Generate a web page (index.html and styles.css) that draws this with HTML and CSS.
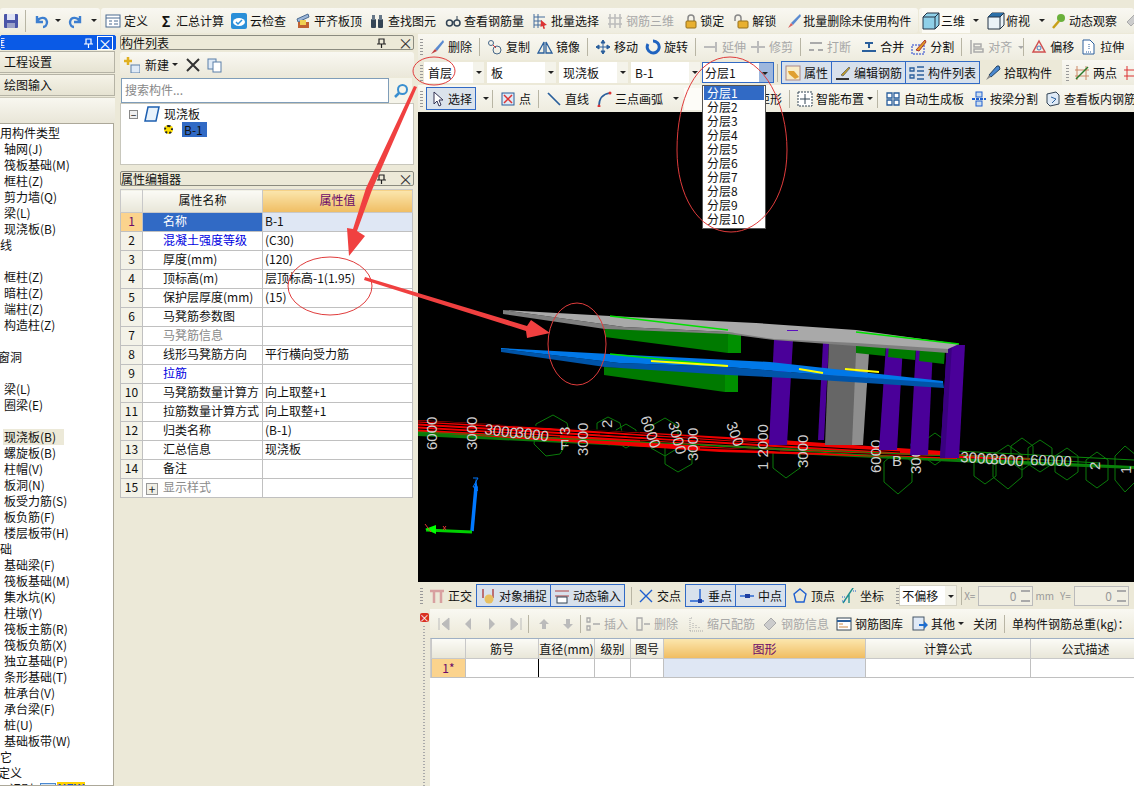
FILE: index.html
```html
<!DOCTYPE html>
<html lang="zh">
<head>
<meta charset="utf-8">
<title>现浇板</title>
<link rel="stylesheet" href="styles.css">
</head>
<body>
<div class="app">
  <div class="topbar">
    <div class="group g1">
      <svg class="ic" viewBox="0 0 16 16"><rect x="1" y="1" width="14" height="14" rx="1" fill="#4a55a8"/><rect x="4" y="1" width="8" height="6" fill="#dfe3f5"/><rect x="4" y="10" width="8" height="5" fill="#9aa0c8"/></svg>
      <span class="sep s1"></span>
      <svg class="ic u1" viewBox="0 0 16 16"><path d="M3 3v6h6M3 9c2-5 9-6 10 0 0 3-2 5-4 5" fill="none" stroke="#3d7fd0" stroke-width="2.4"/></svg>
      <span class="car k1"></span>
      <svg class="ic u2" viewBox="0 0 16 16"><path d="M13 3v6H7M13 9c-2-5-9-6-10 0 0 3 2 5 4 5" fill="none" stroke="#3d7fd0" stroke-width="2.4"/></svg>
      <span class="car k2"></span>
    </div>
    <div class="group g2">
      <span class="it w1"><svg class="ic" viewBox="0 0 16 16"><rect x="1" y="2" width="14" height="12" fill="#fff" stroke="#4a6a90"/><path d="M1 5h14M4 8h3M9 8h4M4 11h3M9 11h4" stroke="#4a6a90"/></svg>定义</span>
      <span class="it w2"><span class="sigma">Σ</span>汇总计算</span>
      <span class="it w3"><svg class="ic" viewBox="0 0 16 16"><rect x="0" y="0" width="16" height="16" rx="2" fill="#2a8fd8"/><ellipse cx="8" cy="9" rx="6" ry="4" fill="#fff"/><path d="M5 9l2 2 4-4" fill="none" stroke="#2a8fd8" stroke-width="1.5"/></svg>云检查</span>
      <span class="it w4"><svg class="ic" viewBox="0 0 16 16"><path d="M2 6l11-5 1 3-11 5z" fill="#9cb6d8" stroke="#4a6a90"/><rect x="3" y="9" width="11" height="6" fill="#c06030"/><rect x="5" y="7" width="6" height="5" fill="#f0d050"/></svg>平齐板顶</span>
      <span class="it w5"><svg class="ic" viewBox="0 0 16 16"><rect x="2" y="6" width="5" height="9" rx="1" fill="#345"/><rect x="9" y="6" width="5" height="9" rx="1" fill="#345"/><rect x="3" y="2" width="3" height="5" fill="#678"/><rect x="10" y="2" width="3" height="5" fill="#678"/></svg>查找图元</span>
      <span class="it w6"><svg class="ic" viewBox="0 0 16 16"><circle cx="4.500" cy="10" r="3" fill="none" stroke="#345" stroke-width="1.500"/><circle cx="12" cy="10" r="3" fill="none" stroke="#345" stroke-width="1.500"/><path d="M7 9h2M12 7V3" stroke="#345"/></svg>查看钢筋量</span>
      <span class="it w7"><svg class="ic" viewBox="0 0 16 16"><path d="M2 1v14M6 1v14M2 4h11M2 8h8M2 12h11" stroke="#456c9c" fill="none"/><path d="M9 7l6 5-3 .5 1 3-1.500 .5-1-3-2 1z" fill="#d33"/></svg>批量选择</span>
      <span class="it off w8"><svg class="ic" viewBox="0 0 16 16"><path d="M3 1v14M8 1v14M13 1v14M1 5h14M1 11h14" stroke="#bbb" stroke-width="1.500" fill="none"/></svg>钢筋三维</span>
      <span class="it w9"><svg class="ic" viewBox="0 0 16 16"><path d="M5 8V5a3 3 0 016 0v3" fill="none" stroke="#888" stroke-width="1.500"/><rect x="3" y="8" width="10" height="7" rx="1" fill="#e8b030" stroke="#96701a"/></svg>锁定</span>
      <span class="it w10"><svg class="ic" viewBox="0 0 16 16"><path d="M1 8V5a3 3 0 016 0v3" fill="none" stroke="#888" stroke-width="1.500"/><rect x="4" y="8" width="10" height="7" rx="1" fill="#e8b030" stroke="#96701a"/></svg>解锁</span>
      <span class="it w11"><svg class="ic" viewBox="0 0 16 16"><path d="M14 1L5 10l2 2 8-9z" fill="#5a8ad0"/><path d="M5 10l-3 5 5-3z" fill="#d86060"/></svg>批量删除未使用构件</span>
    </div>
    <div class="group g3">
      <span class="it w12 lit"><svg class="ic big" viewBox="0 0 18 18"><path d="M1 5l4-4h12v12l-4 4H1z" fill="#8fd0e8" stroke="#234"/><path d="M1 5h12v12M13 5l4-4" fill="none" stroke="#234"/></svg>三维</span>
      <span class="car k3"></span>
      <span class="it w13"><svg class="ic big" viewBox="0 0 18 18"><path d="M1 5l4-4h12v12l-4 4H1z" fill="#eaf3f8" stroke="#234"/><path d="M1 5l4-4h12l-4 4z" fill="#2a6fa8"/><path d="M1 5h12v12M13 5l4-4" fill="none" stroke="#234"/></svg>俯视</span>
      <span class="car k4"></span>
      <span class="it w14"><svg class="ic" viewBox="0 0 16 16"><circle cx="10" cy="5" r="4" fill="#6ab03a"/><path d="M8 8l-6 7" stroke="#c8a018" stroke-width="2.500"/></svg>动态观察</span>
      <svg class="ic w15" viewBox="0 0 16 16"><path d="M3 9l7-7 4 4-7 7z" fill="#ccc" stroke="#aaa"/></svg>
    </div>
  </div>

  <div class="main">
    <aside class="left">
      <div class="title active"><span class="title-text clip">框</span><svg class="pin" viewBox="0 0 10 10"><path d="M3 1h5v5H3zM1 6h9M5.500 6v4" fill="none" stroke="#fff" stroke-width="1.200"/></svg><span class="closebox">×</span></div>
      <div class="nav">工程设置</div>
      <div class="nav">绘图输入</div>
      <div class="blank"></div>
      <div class="tree">
        <div class="hd h1">常用构件类型</div>
        <div class="li">轴网(J)</div><div class="li">筏板基础(M)</div><div class="li">框柱(Z)</div><div class="li">剪力墙(Q)</div><div class="li">梁(L)</div><div class="li">现浇板(B)</div>
        <div class="hd h2">轴线</div>
        <div class="gap"></div>
        <div class="li">框柱(Z)</div><div class="li">暗柱(Z)</div><div class="li">端柱(Z)</div><div class="li">构造柱(Z)</div>
        <div class="gap"></div>
        <div class="hd h3">门窗洞</div>
        <div class="gap"></div>
        <div class="li">梁(L)</div><div class="li">圈梁(E)</div>
        <div class="gap"></div>
        <div class="li sel-li">现浇板(B)</div><div class="li">螺旋板(B)</div><div class="li">柱帽(V)</div><div class="li">板洞(N)</div><div class="li">板受力筋(S)</div><div class="li">板负筋(F)</div><div class="li">楼层板带(H)</div>
        <div class="hd h2">基础</div>
        <div class="li">基础梁(F)</div><div class="li">筏板基础(M)</div><div class="li">集水坑(K)</div><div class="li">柱墩(Y)</div><div class="li">筏板主筋(R)</div><div class="li">筏板负筋(X)</div><div class="li">独立基础(P)</div><div class="li">条形基础(T)</div><div class="li">桩承台(V)</div><div class="li">承台梁(F)</div><div class="li">桩(U)</div><div class="li">基础板带(W)</div>
        <div class="hd h2">其它</div>
        <div class="hd h3">自定义</div>
        <div class="hd h4">CAD识别<span class="grid-ic"></span><span class="new">NEW</span></div>
      </div>
    </aside>

    <section class="mid">
      <div class="title"><span class="title-text">构件列表</span><svg class="pin" viewBox="0 0 10 10"><path d="M3 1h5v5H3zM1 6h9M5.500 6v4" fill="none" stroke="#222" stroke-width="1.200"/></svg><span class="closex">×</span></div>
      <div class="mini">
        <svg class="ic" viewBox="0 0 16 16"><rect x="7" y="8" width="9" height="8" fill="#dfeaf6" stroke="#5a7ea8"/><path d="M4 0v8M0 4h8" stroke="#e0b020" stroke-width="2.500"/></svg>
        <span class="new-t">新建</span><span class="car"></span>
        <svg class="ic x" viewBox="0 0 16 16"><path d="M2 2l12 12M14 2L2 14" stroke="#333" stroke-width="2"/></svg>
        <svg class="ic" viewBox="0 0 16 16"><rect x="1" y="2" width="8" height="10" fill="#dfeaf6" stroke="#5a7ea8"/><rect x="6" y="5" width="8" height="10" fill="#fff" stroke="#5a7ea8"/></svg>
      </div>
      <div class="search">
        <div class="input">搜索构件...</div>
        <div class="sbtn"><svg viewBox="0 0 16 16" class="ic"><circle cx="9.500" cy="6.500" r="4.500" fill="none" stroke="#3a8fd0" stroke-width="2"/><path d="M6 10l-4 4" stroke="#3a8fd0" stroke-width="2.500"/></svg></div>
      </div>
      <div class="ctree">
        <div class="node"><span class="plus">−</span><svg class="ic" viewBox="0 0 16 16"><path d="M4 1h11l-3 14H1z" fill="#e8f2fb" stroke="#1d5fb0" stroke-width="1.500"/></svg><span>现浇板</span></div>
        <div class="node n2"><span class="gear"></span><span class="chosen">B-1</span></div>
      </div>
      <div class="title t2"><span class="title-text">属性编辑器</span><svg class="pin" viewBox="0 0 10 10"><path d="M3 1h5v5H3zM1 6h9M5.500 6v4" fill="none" stroke="#222" stroke-width="1.200"/></svg><span class="closex">×</span></div>
      <div class="props">
        <table class="ptable">
          <colgroup><col class="p0"><col class="p1"><col class="p2"></colgroup>
          <thead><tr><th></th><th>属性名称</th><th class="hot">属性值</th></tr></thead>
          <tbody>
            <tr class="cur"><td class="n">1</td><td class="k">名称</td><td class="v">B-1</td></tr>
            <tr><td class="n">2</td><td class="k link">混凝土强度等级</td><td class="v">(C30)</td></tr>
            <tr><td class="n">3</td><td class="k">厚度(mm)</td><td class="v">(120)</td></tr>
            <tr><td class="n">4</td><td class="k">顶标高(m)</td><td class="v">层顶标高-1(1.95)</td></tr>
            <tr><td class="n">5</td><td class="k">保护层厚度(mm)</td><td class="v">(15)</td></tr>
            <tr><td class="n">6</td><td class="k">马凳筋参数图</td><td class="v"></td></tr>
            <tr><td class="n">7</td><td class="k dim">马凳筋信息</td><td class="v"></td></tr>
            <tr><td class="n">8</td><td class="k">线形马凳筋方向</td><td class="v">平行横向受力筋</td></tr>
            <tr><td class="n">9</td><td class="k link">拉筋</td><td class="v"></td></tr>
            <tr><td class="n">10</td><td class="k">马凳筋数量计算方</td><td class="v">向上取整+1</td></tr>
            <tr><td class="n">11</td><td class="k">拉筋数量计算方式</td><td class="v">向上取整+1</td></tr>
            <tr><td class="n">12</td><td class="k">归类名称</td><td class="v">(B-1)</td></tr>
            <tr><td class="n">13</td><td class="k">汇总信息</td><td class="v">现浇板</td></tr>
            <tr><td class="n">14</td><td class="k">备注</td><td class="v"></td></tr>
            <tr><td class="n">15</td><td class="k dim exp"><span class="plus2">+</span>显示样式</td><td class="v"></td></tr>
          </tbody>
        </table>
      </div>
    </section>

    <section class="right">
      <div class="row r2">
        <span class="handle"></span>
        <span class="it"><svg class="ic" viewBox="0 0 16 16"><path d="M14 1L6 10l2 2 7-9z" fill="#5a8ad0"/><path d="M6 10l-4 5 6-3z" fill="#c04040"/></svg>删除</span><span class="sep"></span>
        <span class="it"><svg class="ic" viewBox="0 0 16 16"><circle cx="4" cy="4" r="2.500" fill="none" stroke="#468"/><circle cx="10" cy="11" r="4" fill="none" stroke="#468"/><path d="M6 6l3 3" stroke="#d33"/></svg>复制</span>
        <span class="it"><svg class="ic" viewBox="0 0 16 16"><path d="M7 3v11H1zM9 3v11h6z" fill="none" stroke="#2a5f9c" stroke-width="1.300"/></svg>镜像</span><span class="sep"></span>
        <span class="it"><svg class="ic" viewBox="0 0 16 16"><path d="M8 1v14M1 8h14M8 1L6 4h4zM8 15l-2-3h4zM1 8l3-2v4zM15 8l-3-2v4z" fill="#2a5f9c" stroke="#2a5f9c"/></svg>移动</span>
        <span class="it"><svg class="ic" viewBox="0 0 16 16"><path d="M8 2a6 6 0 11-5 3" fill="none" stroke="#1f63c0" stroke-width="3"/></svg>旋转</span><span class="sep"></span>
        <span class="it off"><svg class="ic" viewBox="0 0 16 16"><path d="M1 8h11M13 3v10" stroke="#bbb" stroke-width="2"/></svg>延伸</span>
        <span class="it off pull3"><svg class="ic" viewBox="0 0 16 16"><path d="M1 8h14M8 2v12" stroke="#bbb" stroke-width="2"/></svg>修剪</span><span class="sep"></span>
        <span class="it off"><svg class="ic" viewBox="0 0 16 16"><path d="M1 11h5M10 11h5M2 4h12" stroke="#aaa" stroke-width="2"/></svg>打断</span>
        <span class="it push3"><svg class="ic" viewBox="0 0 16 16"><path d="M1 12h14M4 4h8M8 4v5" stroke="#2a5f9c" stroke-width="2"/></svg>合并</span>
        <span class="it"><svg class="ic" viewBox="0 0 16 16"><rect x="1" y="6" width="12" height="9" fill="none" stroke="#1f3fd0" stroke-dasharray="2 1"/><path d="M14 1L5 11l3 1 7-9z" fill="#e0a020" stroke="#a33"/></svg>分割</span><span class="sep"></span>
        <span class="it off"><svg class="ic" viewBox="0 0 16 16"><path d="M2 1v14M5 5h7v3H5zM5 10h9v3H5z" fill="none" stroke="#aaa" stroke-width="1.500"/></svg>对齐<span class="car light"></span></span><span class="sep pull8"></span>
        <span class="it"><svg class="ic" viewBox="0 0 16 16"><path d="M8 2l6 11H2z" fill="none" stroke="#d05050" stroke-width="1.500"/><circle cx="8" cy="9" r="2" fill="none" stroke="#4a7ac0"/></svg>偏移</span>
        <span class="it"><svg class="ic" viewBox="0 0 16 16"><path d="M2 1h7l4 4v10H2z" fill="#fff" stroke="#2a5f9c"/><path d="M5 13h6M8 5v6" stroke="#2a5f9c" stroke-dasharray="1 1"/></svg>拉伸</span>
      </div>
      <div class="row r3">
        <span class="handle"></span>
        <span class="sel s-a">首层<i class="drop"></i></span>
        <span class="sel s-b">板<i class="drop"></i></span>
        <span class="sel s-b">现浇板<i class="drop"></i></span>
        <span class="sel s-b">B-1<i class="drop"></i></span>
        <span class="sel s-c">分层1<i class="drop open"></i>
          <span class="list">
            <span class="opt on">分层1</span><span class="opt">分层2</span><span class="opt">分层3</span><span class="opt">分层4</span><span class="opt">分层5</span><span class="opt">分层6</span><span class="opt">分层7</span><span class="opt">分层8</span><span class="opt">分层9</span><span class="opt">分层10</span>
          </span>
        </span>
        <span class="sep"></span>
        <span class="btn"><svg class="ic" viewBox="0 0 16 16"><rect x="1" y="1" width="14" height="14" fill="#f8ecc8" stroke="#a88"/><path d="M3 6h6l5 6-4 2-6-5z" fill="#e0a030"/></svg>属性</span>
        <span class="btn"><svg class="ic" viewBox="0 0 16 16"><path d="M14 2L6 10l2 1 7-8z" fill="#c8a020" stroke="#776"/><path d="M1 14h13" stroke="#333" stroke-width="2"/></svg>编辑钢筋</span>
        <span class="btn"><svg class="ic" viewBox="0 0 16 16"><path d="M1 3h4v3H1zM1 10h4v3H1zM8 2h7M8 6h7M8 10h7M8 14h7" fill="none" stroke="#2a5f9c" stroke-width="1.300"/></svg>构件列表</span>
        <span class="it pick"><svg class="ic" viewBox="0 0 16 16"><path d="M14 1l-2-0-8 9 2 2 9-8z" fill="#4a88d0" stroke="#246"/><path d="M4 10l-3 5 5-3z" fill="#888"/></svg>拾取构件</span>
        <span class="chip"><span class="handle"></span><span class="it"><svg class="ic" viewBox="0 0 16 16"><path d="M3 1v14M12 1v14M1 5h14M1 11h14" stroke="#c86"/><path d="M2 14L14 2" stroke="#2a7a2a" stroke-width="1.500"/></svg>两点</span><svg class="ic last" viewBox="0 0 16 16"><path d="M4 1v14M12 1v14M1 5h14M1 11h14" stroke="#d33"/></svg></span>
      </div>
      <div class="row r4">
        <span class="handle"></span>
        <span class="it pressed"><svg class="ic" viewBox="0 0 16 16"><path d="M5 1v12l3-3 2 5 2-1-2-5h4z" fill="#fff" stroke="#335"/></svg>选择</span><span class="car"></span><span class="sep pull4"></span>
        <span class="it"><svg class="ic" viewBox="0 0 16 16"><rect x="2" y="2" width="12" height="12" fill="#dfeaf6" stroke="#2a5f9c"/><path d="M4 4l8 8M12 4l-8 8" stroke="#d33" stroke-width="1.500"/></svg>点</span><span class="sep"></span>
        <span class="it"><svg class="ic" viewBox="0 0 16 16"><path d="M2 2l12 12" stroke="#2a5f9c" stroke-width="1.700"/></svg>直线</span>
        <span class="it"><svg class="ic" viewBox="0 0 16 16"><path d="M3 15C3 7 7 3 14 2" fill="none" stroke="#2a5f9c" stroke-width="1.700"/><circle cx="3" cy="15" r="1.500" fill="#d33"/><circle cx="14" cy="2" r="1.500" fill="#d33"/></svg>三点画弧</span><span class="car push3"></span>
        <span class="hidden-white"></span>
        <span class="it rect">矩形</span><span class="sep"></span>
        <span class="it"><svg class="ic" viewBox="0 0 16 16"><rect x="1" y="1" width="14" height="14" fill="#fff" stroke="#345" stroke-dasharray="2 1"/><path d="M8 3v10M3 8h10" stroke="#345"/></svg>智能布置<span class="car"></span></span><span class="sep pull3"></span>
        <span class="it"><svg class="ic" viewBox="0 0 16 16"><path d="M2 2h5v5H2zM9 2h5v5H9zM2 9h5v5H2zM9 9h5v5H9z" fill="#fff" stroke="#2a5f9c" stroke-width="1.300"/></svg>自动生成板</span>
        <span class="it"><svg class="ic" viewBox="0 0 16 16"><path d="M1 8h14" stroke="#1f5fd0" stroke-width="2" stroke-dasharray="3 1"/><rect x="5" y="1" width="6" height="5" fill="#cde" stroke="#1f5fd0"/><rect x="5" y="10" width="6" height="5" fill="#cde" stroke="#1f5fd0"/></svg>按梁分割</span>
        <span class="it"><svg class="ic" viewBox="0 0 16 16"><path d="M2 3l9-2 3 3v9l-9 2-3-3z" fill="#dfeaf6" stroke="#345"/><path d="M6 6l5 2-4 4" fill="none" stroke="#2a5f9c"/></svg>查看板内钢筋</span>
      </div>

      <div class="canvas">
        <svg class="scene" viewBox="418 112 716 470" preserveAspectRatio="none">
          <rect x="418" y="112" width="716" height="470" fill="#000"/>
          <g class="hex">
            <path d="M553 415l14 8 3 14-10 17-14 2-12-12 2-20z"/><path d="M608 417l12 6 3 14-14 8-12-8v-14z"/><path d="M626 424l10 6v12l-10 6-10-6v-12z"/>
            <path d="M665 418l13 8v22l-13 8-14-8v-22z"/><path d="M678 436l14 8v20l-14 8-13-8v-20z"/><path d="M786 440l14 10v18l-14 10-13-10v-18z"/>
            <path d="M898 450l14 12v20l-14 12-14-12v-20z"/><path d="M935 433l11 8v16l-11 8-11-8v-16z"/><path d="M1008 445l14 10v22l-14 12-15-12v-22z"/>
            <path d="M1067 448l11 8v16l-11 8-12-8v-16z"/><path d="M1097 452l11 8v20l-11 8-11-8v-20z"/><path d="M1125 446l12 10v24l-12 12-10-12v-24z"/>
            <path d="M1040 440l12 8v16l-12 8-12-8v-16z"/><path d="M1022 438l11 8v16l-11 8-11-8v-16z"/><path d="M985 452l11 8v16l-11 8-11-8v-16z"/>
          </g>
          <polygon class="g-d" points="418,431 957,458 1134,466 1134,469 957,462 418,436"/>
          <polygon class="red" points="418,420 780,440 957,452 957,459 720,452 418,432"/>
          <polygon class="red" points="957,454 1030,458 1030,460 957,458"/>
          <g class="blk">
            <path d="M418 423L700 440M418 426L800 449M418 429L560 437M500 424L760 442M600 434L900 452M700 448L950 457M418 421L640 432M640 441L780 451"/>
          </g>
          <g class="grn">
            <path d="M957 451L1134 460M957 459L1134 467M700 445L950 460M418 432L950 456M957 455L1100 463"/>
          </g>
          <g class="labels">
            <text transform="translate(437,450) rotate(-90)">6000</text>
            <text transform="translate(477,450) rotate(-90)">3000</text>
            <text transform="translate(588,456) rotate(-90)">3000</text>
            <text transform="translate(698,461) rotate(-90)">3000</text>
            <text transform="translate(768,470) rotate(-90)">1 2000</text>
            <text transform="translate(808,468) rotate(-90)">3000</text>
            <text transform="translate(881,473) rotate(-90)">6000</text>
            <text transform="translate(921,474) rotate(-90)">3000</text>
            <text transform="translate(640,418) rotate(70)">6000</text>
            <text transform="translate(668,423) rotate(75)">3000</text>
            <text transform="translate(726,424) rotate(70)">300</text>
            <text transform="translate(484,434) rotate(8)">3000</text>
            <text transform="translate(515,437) rotate(8)">3000</text>
            <text transform="translate(960,462) rotate(4)">3000</text>
            <text transform="translate(990,464) rotate(4)">3000</text>
            <text transform="translate(1030,465) rotate(2)">60000</text>
            <text transform="translate(570,435) rotate(-90)">3</text>
            <text transform="translate(612,428) rotate(-90)">2</text>
            <text transform="translate(1100,470) rotate(-90)">2</text>
            <text transform="translate(1131,474) rotate(-90)">1</text>
            <text transform="translate(892,466)">B</text>
            <text transform="translate(560,450)">F</text>
          </g>
          <polygon class="pur" points="823,342 829,342 824,440 818,440"/>
          <polygon points="829,342 857,344 853,445 825,445" fill="#666"/>
          <polygon points="856,353 869,353 863,445 852,445" fill="#8e8e8e"/>
          <polygon class="pur" points="774,340 793,340 787,445 769,445"/>
          <polygon class="pur" points="886,345 903,345 897,450 879,450"/>
          <polygon class="pur" points="916,347 933,347 928,455 910,455"/>
          <polygon class="pur" points="947,345 965,345 959,458 940,458"/>
          <polygon class="pur2" points="947,345 952,345 945,458 940,458"/>
          <polygon class="gb" points="605,329 728,332 728,353 605,337"/><polygon class="gb2" points="728,332 741,333 741,353 728,353"/>
          <polygon class="gb" points="856,344 886,346 885,356 856,353"/><polygon class="gb" points="889,346 916,348 915,360 888,357"/><polygon class="gb" points="920,348 945,350 944,364 919,361"/>
          <polygon points="503,310 624,327 728,332 856,342 948,347 948,353 856,346 774,340 728,334 605,329 503,314" fill="#7f7f7f"/>
          <polygon points="503,310 610,316 756,323 856,330 959,344 948,349 856,343 774,339 741,334 728,332 624,327" fill="#a9a9a9"/>
          <path class="lime" d="M610 316L728 330M856 332L959 344"/>
          <polygon points="787,330 798,330 798,331 787,331" fill="#5a10c0"/>
          <polygon class="gb" points="604,367 725,371 725,392 604,375"/><polygon class="gb2" points="725,371 738,371 738,392 725,392"/>
          <polygon points="501,349 619,363 728,367 800,373 943,382 944,388 788,378 728,375 605,367 501,352" fill="#0054a8"/>
          <polygon points="501,348 610,354 770,362 943,381 943,383 800,373 728,367 619,363 501,349" fill="#0078e8"/>
          <path class="lime" d="M610 354L728 366"/>
          <path class="yel" d="M651 361L728 366M799 369L823 373M845 369L879 372"/>
          <path d="M472 531L476 487" stroke="#0078ff" stroke-width="3.500"/>
          <path d="M476 478L474 491h4z" fill="#0078ff"/>
          <path d="M473 478h5l-5 9h5" fill="none" stroke="#0078ff"/>
          <path d="M426 530L472 532" stroke="#00d000" stroke-width="3"/>
          <path d="M425 529L436 525v9z" fill="#00ff00"/>
          <path d="M425 524l6 8M443 526l3 4M446 526l-3 4" stroke="#d33"/>
        </svg>
      </div>

      <div class="row ra">
        <span class="handle"></span>
        <span class="it"><svg class="ic" viewBox="0 0 16 16"><path d="M1 3h14M5 3v12M12 3v12" stroke="#d8a0a0" stroke-width="2.500"/></svg>正交</span>
        <span class="btn"><svg class="ic" viewBox="0 0 16 16"><path d="M3 1v9M13 1v9" stroke="#b04040" stroke-width="1.400"/><circle cx="9" cy="11" r="4.500" fill="#e8c060"/></svg>对象捕捉</span>
        <span class="btn"><svg class="ic" viewBox="0 0 16 16"><path d="M1 3h14M1 8h14" stroke="#b04040"/><rect x="3" y="9" width="10" height="6" fill="#fff" stroke="#345"/></svg>动态输入</span>
        <span class="sep"></span>
        <span class="it"><svg class="ic" viewBox="0 0 16 16"><path d="M2 2l12 12M14 2L2 14" stroke="#1f5fd0" stroke-width="1.400"/></svg>交点</span>
        <span class="btn"><svg class="ic" viewBox="0 0 16 16"><path d="M1 13h14M11 1v14" stroke="#1f5fd0" stroke-width="1.400"/><rect x="9" y="11" width="4" height="4" fill="#1f3fa0"/></svg>垂点</span>
        <span class="btn"><svg class="ic" viewBox="0 0 16 16"><path d="M1 8h14" stroke="#1f5fd0" stroke-width="1.400"/><rect x="6" y="6" width="5" height="4" fill="#1f3fa0"/></svg>中点</span>
        <span class="it"><svg class="ic" viewBox="0 0 16 16"><path d="M8 1l6 5-2 8H4L2 6z" fill="none" stroke="#1f5fd0" stroke-width="1.400"/></svg>顶点</span>
        <span class="it"><svg class="ic" viewBox="0 0 16 16"><path d="M8 6v9M2 15l6-9 6-9" fill="none" stroke="#1f8f8f" stroke-width="1.400"/><path d="M1 9h3M12 3h3M1 13h3" stroke="#1f5fd0" stroke-dasharray="1 1"/></svg>坐标</span>
        <span class="handle h-in2"></span>
        <span class="sel s-d">不偏移<i class="drop"></i></span>
        <span class="sep sp-d"></span>
        <span class="lab lx">X=</span><span class="num">0<i class="spin"></i></span><span class="lab lm">mm</span><span class="lab">Y=</span><span class="num">0<i class="spin"></i></span>
      </div>

      <div class="lower">
        <div class="strip"><span class="err">×</span><span class="dots"></span></div>
        <div class="lowmain">
          <div class="row rb">
            <svg class="ic off-ic" viewBox="0 0 16 16"><path d="M3 2v12M13 2L6 8l7 6z" fill="#bbb" stroke="#bbb"/></svg>
            <svg class="ic off-ic" viewBox="0 0 16 16"><path d="M11 2L5 8l6 6z" fill="#bbb"/></svg>
            <svg class="ic off-ic" viewBox="0 0 16 16"><path d="M5 2l6 6-6 6z" fill="#bbb"/></svg>
            <svg class="ic off-ic" viewBox="0 0 16 16"><path d="M13 2v12M3 2l7 6-7 6z" fill="#bbb" stroke="#bbb"/></svg>
            <span class="sep pull4"></span>
            <svg class="ic off-ic" viewBox="0 0 16 16"><path d="M8 3l5 5h-3v5H6V8H3z" fill="#bbb"/></svg>
            <svg class="ic off-ic" viewBox="0 0 16 16"><path d="M8 13l5-5h-3V3H6v5H3z" fill="#bbb"/></svg>
            <span class="sep pull4"></span>
            <span class="it off pull3"><svg class="ic" viewBox="0 0 16 16"><path d="M2 2h3v4H2zM2 10h3v4H2zM8 8h7" fill="none" stroke="#aaa" stroke-width="1.300"/></svg>插入</span>
            <span class="it off"><svg class="ic" viewBox="0 0 16 16"><path d="M2 2h5v12H2zM9 8h6" fill="none" stroke="#aaa" stroke-width="1.300"/></svg>删除</span>
            <span class="it off push3"><svg class="ic" viewBox="0 0 16 16"><path d="M2 15V2h3M2 15h13M5 12V6M8 12V8M11 12V10" fill="none" stroke="#aaa" stroke-dasharray="1 1"/></svg>缩尺配筋</span>
            <span class="it off"><svg class="ic" viewBox="0 0 16 16"><path d="M2 9l7-7 5 5-7 7z" fill="#ccc" stroke="#aaa"/></svg>钢筋信息</span>
            <span class="it"><svg class="ic" viewBox="0 0 16 16"><rect x="1" y="2" width="14" height="12" fill="#fff" stroke="#345"/><path d="M1 5h14" stroke="#2a5f9c" stroke-width="2"/><path d="M3 8h4M3 11h9" stroke="#c84"/></svg>钢筋图库</span>
            <span class="it push2"><svg class="ic" viewBox="0 0 16 16"><rect x="1" y="1" width="11" height="13" fill="#e0eaf6" stroke="#456"/><path d="M7 8h5V5l4 4-4 4v-3H7z" fill="#1f6fd0"/></svg>其他<span class="car"></span></span>
            <span class="it push2">关闭</span><span class="sep"></span>
            <span class="it">单构件钢筋总重(kg)：</span>
          </div>
          <div class="sheet">
            <table class="stable">
              <colgroup><col class="q0"><col class="q1"><col class="q2"><col class="q3"><col class="q4"><col class="q5"><col class="q6"><col class="q7"></colgroup>
              <thead><tr><th></th><th>筋号</th><th>直径(mm)</th><th>级别</th><th>图号</th><th class="hot">图形</th><th>计算公式</th><th>公式描述</th></tr></thead>
              <tbody><tr><td class="n">1*</td><td class="caret"></td><td></td><td></td><td></td><td class="tint"></td><td></td><td></td></tr></tbody>
            </table>
          </div>
        </div>
      </div>
    </section>
  </div>

  <svg class="annot" viewBox="0 0 1134 786">
    <g class="ring">
      <ellipse cx="434" cy="71" rx="21" ry="14"/>
      <path d="M677 150C677 100 695 57 730 57C765 57 787 105 787 150C787 200 760 232 731 232C698 232 677 195 677 150Z"/>
      <ellipse cx="330" cy="286" rx="42" ry="29"/>
      <ellipse cx="577" cy="344" rx="29" ry="41"/>
    </g>
    <path class="arr" d="M417 87L372 190L357 231L365 236L349 256L347 228L353 229L366 188L414 86Z"/>
    <path class="arr" d="M365 277L527 326L531 320L550 333L527 338L526 331L364 280Z"/>
  </svg>
</div>
</body>
</html>
```
FILE: styles.css
```css
* { box-sizing: border-box; }
html, body { margin: 0; padding: 0; }
body { background: #ece9d8; font: 12px/16px "Noto Sans CJK SC", "Liberation Sans", sans-serif; color: #111; }
.app { position: relative; width: 1134px; height: 786px; overflow: hidden; background: #ece9d8; }

.ic { width: 16px; height: 16px; flex: none; display: block; }
.ic.big { width: 18px; height: 18px; }
.it { display: inline-flex; align-items: center; gap: 3px; white-space: nowrap; flex: none; }
.off { color: #a8a8a8; }
.sep { width: 1px; height: 18px; background: #b8b5a4; flex: none; }
.car { width: 0; height: 0; border: 3px solid transparent; border-top: 3px solid #222; border-bottom: 0; flex: none; display: inline-block; }
.car.light { border-top-color: #aaa; margin-left: 3px; }
.handle { width: 3px; height: 16px; flex: none; background: repeating-linear-gradient(#999 0 1px, transparent 1px 3px); }
.pull3 { margin-left: -3px; }
.pull4 { margin-left: -4px; }
.pull8 { margin-left: -8px; }
.push2 { margin-left: 2px; }
.push3 { margin-left: 3px; }

.topbar { height: 34px; padding-top: 8px; display: flex; gap: 1px; }
.group { height: 25px; display: flex; align-items: center; background: linear-gradient(#f9f8f2, #eeecdf); border-radius: 3px; flex: none; }
.g1 { width: 100px; padding-left: 3px; }
.s1 { margin: 0 8px 0 6px; height: 22px; }
.u1 { margin-right: 5px; }
.k1 { margin-right: 6px; }
.k2 { margin-left: 8px; }
.g2 { width: 817px; padding-left: 4px; }
.g3 { width: 215px; padding-left: 3px; overflow: hidden; }
.sigma { width: 14px; font-weight: 700; font-size: 14px; text-align: center; }
.w1 { margin-right: 11px; }
.w2 { margin-right: 7px; }
.w3 { margin-right: 9px; }
.w4 { margin-right: 7px; }
.w5 { margin-right: 9px; }
.w6 { margin-right: 8px; }
.w7 { margin-right: 8px; }
.w8 { margin-right: 9px; }
.w9 { margin-right: 10px; gap: 1px; }
.w10 { margin-right: 10px; gap: 2px; }
.w11 { gap: 1px; }
.lit { background: #fbfaf4; height: 25px; padding-right: 5px; gap: 1px; }
.k3 { margin: 0 8px 0 3px; }
.w13 { gap: 1px; }
.k4 { margin: 0 6px 0 9px; }
.w14 { gap: 2px; }
.w15 { margin-left: 7px; }

.main { display: flex; height: 752px; }
.left { width: 116px; flex: none; display: flex; flex-direction: column; padding-top: 1px; }
.title { height: 15px; display: flex; align-items: center; border: 1px solid #8b8b80; border-radius: 2px; background: #ece9d8; flex: none; }
.title.active { background: #0a5ae6; color: #fff; border-color: #0a5ae6; }
.title-text { flex: 1; white-space: nowrap; overflow: hidden; line-height: 13px; }
.clip { text-indent: -8px; }
.pin { width: 10px; height: 10px; margin-right: 12px; }
.title.active .pin { margin-right: 4px; }
.closebox { width: 16px; height: 14px; border: 1px solid #fff; line-height: 12px; text-align: center; font-size: 14px; margin-right: 2px; }
.closex { width: 12px; line-height: 12px; font-size: 15px; margin-right: 3px; text-align: center; color: #333; }
.nav { height: 22px; margin-top: 1px; padding-left: 4px; line-height: 19px; border: 1px solid #b5b3a5; border-left: 0; background: linear-gradient(#f5f3e8, #e6e3d2); width: 115px; }
.blank { height: 26px; flex: none; border-top: 1px solid #c9c7b8; background: linear-gradient(#f8f7f0, #e9e6d8); width: 115px; margin-top: 1px; }
.tree { flex: 1; width: 114px; background: #fff; border: 1px solid #aca899; border-left: 0; overflow: hidden; padding-top: 1px; }
.li { height: 16px; line-height: 16px; padding-left: 4px; white-space: nowrap; }
.gap { height: 16px; }
.hd { height: 16px; line-height: 16px; white-space: nowrap; }
.h1 { margin-left: -12px; }
.h2 { margin-left: -12px; }
.h3 { margin-left: -14px; }
.h4 { margin-left: -14px; }
.sel-li { background: #ece9d8; margin-left: 3px; padding-left: 1px; width: 61px; }
.grid-ic { display: inline-block; width: 16px; height: 9px; border: 1px solid #4a88d0; background: #cfe2f6; margin: 0 1px 0 7px; vertical-align: 2px; }
.new { display: inline-block; background: #ffd000; color: #1a4fd0; font-size: 12px; font-weight: 700; line-height: 12px; vertical-align: 1px; }

.mid { width: 299px; flex: none; padding: 1px 1px 0 4px; display: flex; flex-direction: column; background: #ece9d8; }
.mini { height: 25px; margin-top: 2px; display: flex; align-items: center; padding-left: 4px; background: linear-gradient(#f9f8f2, #ebe8da); border-radius: 3px; flex: none; }
.new-t { margin: 0 3px 0 5px; }
.x { margin: 0 6px 0 7px; }
.search { height: 25px; margin: 1px 2px 0 1px; display: flex; flex: none; }
.input { flex: 1; background: #fff; border: 1px solid #7f9db9; color: #888; padding-left: 3px; line-height: 22px; }
.sbtn { width: 23px; display: flex; align-items: center; justify-content: center; background: #f5f4ea; }
.ctree { height: 62px; flex: none; background: #fff; border: 1px solid #c8c7bc; padding: 2px 0 0 8px; }
.node { display: flex; align-items: center; height: 16px; gap: 4px; }
.n2 { margin: -1px 0 0 37px; gap: 9px; }
.plus { width: 9px; height: 9px; border: 1px solid #888; line-height: 7px; font-size: 10px; text-align: center; background: #eee; margin-right: 2px; }
.gear { width: 9px; height: 9px; border-radius: 50%; background: #ffe000; border: 2px dotted #222; margin-left: -2px; }
.chosen { background: #316ac5; color: #111; width: 25px; padding-left: 2px; line-height: 15px; }
.t2 { margin-top: 6px; }
.props { margin-top: 3px; flex: 1; background: #ece9d8; }
table { border-collapse: collapse; table-layout: fixed; }
.ptable { width: 292px; background: #fff; border: 1px solid #9fb0c4; }
.p0 { width: 22px; }
.p1 { width: 120px; }
.p2 { width: 150px; }
.ptable th { height: 23px; padding: 0 0 2px; font-weight: 400; text-align: center; background: linear-gradient(#fbfbf6, #e8e6d8); border: 1px solid #c8c8c8; }
th.hot { background: linear-gradient(#fbe6ae, #f0bd62); color: #6a0a6a; }
.ptable td { height: 19px; padding: 0 0 2px 2px; border: 1px solid #c0c0c0; white-space: nowrap; overflow: hidden; line-height: 16px; }
.ptable td.n { padding: 0 0 2px; text-align: center; background: #f3f2e8; }
.ptable td.k { padding-left: 20px; }
.cur td.n { background: #fbd38d; color: #6a0a6a; }
.cur td.k { background: #316ac5; color: #fff; }
.cur td.v { background: #dfe7f4; }
.link { color: #0000e0; }
.dim { color: #8a8a8a; }
.ptable td.exp { padding-left: 3px; }
.plus2 { display: inline-block; width: 12px; height: 12px; line-height: 10px; border: 1px solid #999; background: #f0efe6; color: #222; text-align: center; margin-right: 5px; vertical-align: -2px; }

.right { flex: 1; min-width: 0; overflow: hidden; padding-left: 3px; display: flex; flex-direction: column; }
.row { display: flex; align-items: center; white-space: nowrap; flex: none; }
.r2 { height: 26px; gap: 7px; padding-left: 2px; background: linear-gradient(#f9f8f2, #eeecdf); }
.r2 .handle { margin-right: -1px; }
.r3 { height: 25px; padding-left: 2px; gap: 3px; position: relative; z-index: 5; }
.r3 .handle { margin-right: -2px; }
.r4 { height: 27px; gap: 7px; padding-left: 2px; background: linear-gradient(#f9f8f2, #eeecdf); }
.r4 .handle { margin-right: -4px; }
.sel { position: relative; height: 21px; background: #fff; display: flex; align-items: center; padding-left: 4px; flex: none; }
.s-a { width: 60px; }
.s-b { width: 69px; }
.s-c { width: 72px; border: 1px solid #316ac5; margin-left: -1px; padding-left: 2px; }
.s-d { width: 58px; padding-left: 2px; margin-left: -6px; border: 1px solid #d6d3c5; }
.drop { position: absolute; right: 0; top: 0; bottom: 0; width: 11px; background: #f4f3ea; }
.drop::after { content: ""; position: absolute; left: 3px; top: 9px; border: 3px solid transparent; border-top-color: #222; border-bottom: 0; }
.drop.open { width: 14px; background: #9db7dd; }
.list { position: absolute; left: -1px; top: 22px; width: 64px; height: 144px; padding: 0 1px; background: #fff; border: 1px solid #555; display: flex; flex-direction: column; z-index: 6; }
.opt { height: 14px; line-height: 14px; padding-left: 3px; flex: none; }
.opt.on { background: #316ac5; color: #fff; }
.btn { display: inline-flex; align-items: center; gap: 3px; height: 23px; padding: 0 3px; border: 1px solid #316ac5; background: #d8e1ec; flex: none; }
.r3 .btn + .btn { margin-left: -4px; }
.pick { margin: 0 7px 0 2px; }
.chip { display: flex; align-items: center; height: 25px; gap: 5px; background: linear-gradient(#f9f8f2, #eeecdf); padding-left: 4px; flex: none; }
.chip .handle { margin: 0; }
.last { margin-left: 1px; }
.pressed { background: #dbe3ec; border: 1px solid #316ac5; height: 23px; padding: 0 3px 0 2px; }
.hidden-white { width: 81px; height: 22px; background: #fdfcf8; margin: 0 -14px 0 -2px; flex: none; }
.rect { width: 24px; }

.canvas { height: 470px; flex: none; background: #000; }
.scene { display: block; width: 716px; height: 470px; }
.hex path { fill: none; stroke: #0a7a0a; stroke-width: 1; }
.red { fill: #f00000; }
.g-d { fill: #0a7a0a; }
.blk { fill: none; stroke: #000; stroke-width: 1; }
.grn { fill: none; stroke: #0a8a0a; stroke-width: 1; }
.labels text { fill: #cfcfcf; font: 15px "Liberation Sans", sans-serif; }
.pur { fill: #4a0099; }
.pur2 { fill: #3a0080; }
.gb { fill: #007a00; }
.gb2 { fill: #009000; }
.lime { fill: none; stroke: #00e000; stroke-width: 1.500; }
.yel { fill: none; stroke: #ffff00; stroke-width: 2; }

.ra { height: 27px; gap: 6px; padding-left: 2px; background: #ece9d8; }
.ra .btn { margin-left: -2px; }
.ra .btn + .btn { margin-left: -7px; }
.h-in2 { margin-left: 6px; }
.sp-d { margin-left: -2px; }
.lab { color: #999; font-size: 10px; flex: none; }
.lx { margin-left: -4px; }
.lm { margin-left: -4px; }
.num { position: relative; width: 55px; height: 20px; margin-left: -3px; padding-right: 16px; text-align: right; color: #999; border: 1px solid #bbb; background: #f0eee2; line-height: 18px; flex: none; }
.spin { position: absolute; right: 2px; top: 3px; width: 9px; height: 12px; border-top: 2px solid #aaa; border-bottom: 2px solid #aaa; }

.lower { flex: 1; display: flex; min-height: 0; }
.strip { width: 12px; flex: none; position: relative; padding-top: 4px; display: flex; flex-direction: column; align-items: center; gap: 4px; overflow: hidden; }
.err { width: 9px; height: 9px; background: #d83020; color: #fff; font-size: 10px; line-height: 9px; text-align: center; border-radius: 2px; flex: none; }
.dots { width: 2px; flex: 1; background: repeating-linear-gradient(#aaa 0 1px, transparent 1px 3px); }
.lowmain { flex: 1; min-width: 0; background: #fff; }
.rb { height: 29px; gap: 7px; padding-left: 6px; background: linear-gradient(#f9f8f2, #ece9d8); }
.off-ic { margin-right: 1px; }
.sheet { border-top: 1px solid #9fb0c4; border-left: 1px solid #ccc; overflow: hidden; }
.stable { width: 709px; }
.q0 { width: 34px; }
.q1 { width: 73px; }
.q2 { width: 56px; }
.q3 { width: 36px; }
.q4 { width: 33px; }
.q5 { width: 202px; }
.q6 { width: 165px; }
.q7 { width: 110px; }
.stable th { height: 19px; padding: 0; font-weight: 400; text-align: center; background: linear-gradient(#fbfbf6, #e8e6d8); border: 1px solid #c8c8c8; border-top: 0; line-height: 15px; white-space: nowrap; overflow: hidden; }
.stable th.hot { background: linear-gradient(#fbe6ae, #f0bd62); }
.stable td { height: 19px; padding: 0; border: 1px solid #c0c0c0; }
.stable td.n { background: #fbd38d; color: #6a0a6a; text-align: center; }
.stable td.tint { background: #dfe7f4; }
.stable td.caret { border-right: 1px solid #000; }

.annot { position: absolute; left: 0; top: 0; width: 1134px; height: 786px; pointer-events: none; z-index: 9; }
.ring { fill: none; stroke: #e03c3c; stroke-width: 1; }
.arr { fill: #f04040; }
```
